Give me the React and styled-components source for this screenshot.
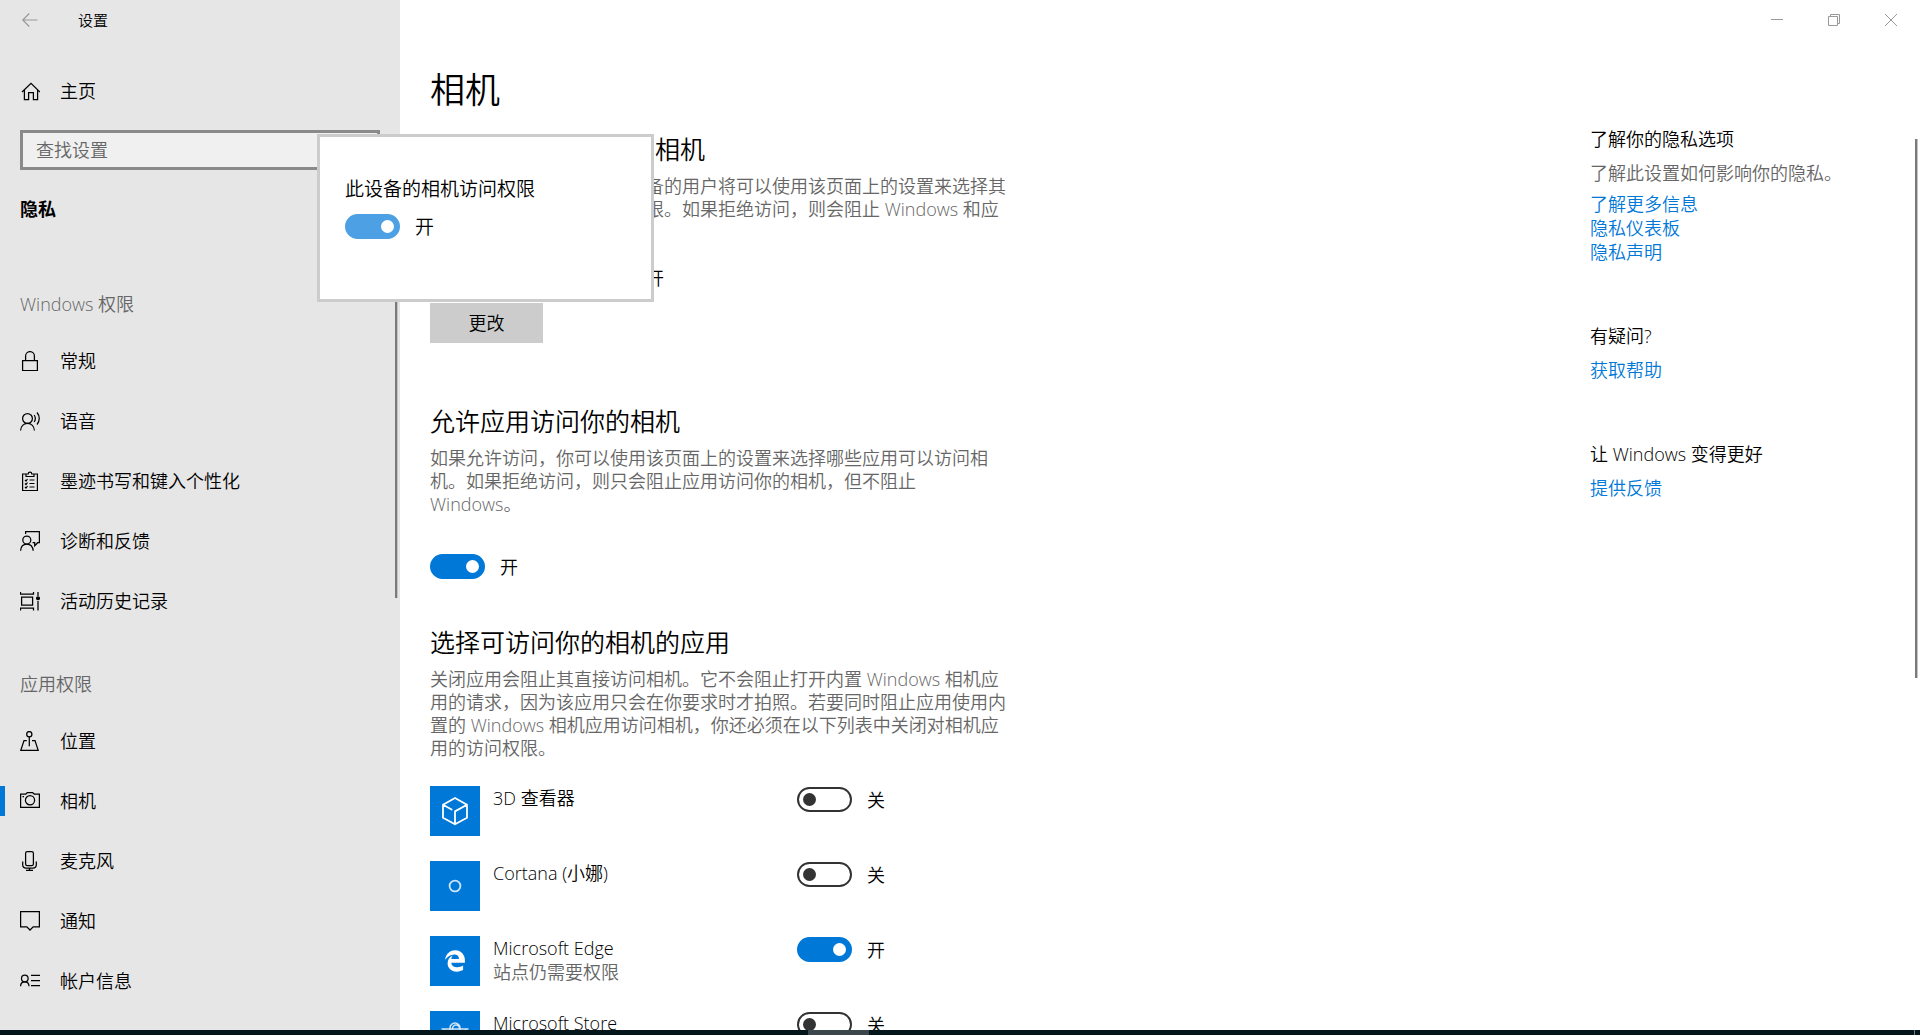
import React, { useState } from 'react';
import styled, { createGlobalStyle, css } from 'styled-components';
import { FaEdgeLegacy } from 'react-icons/fa6';

const GlobalStyle = createGlobalStyle`
  *, *::before, *::after { box-sizing: border-box; }
  html, body, #root { height: 100%; }
  body {
    margin: 0;
    background: #fff;
    color: #000;
    font-family: "Open Sans", "Noto Sans CJK SC", sans-serif;
    font-size: 18px;
    font-weight: 350;
    line-height: 24px;
  }
  h1, h2, h3, p, ul { margin: 0; padding: 0; font-size: inherit; font-weight: inherit; }
  ul { list-style: none; }
  button, input { font: inherit; color: inherit; }
`;

const Desktop = styled.div`
  position: relative;
  display: flex;
  flex-direction: column;
  height: 100vh;
  overflow: hidden;
`;

const Window = styled.div`
  display: flex;
  flex: 1;
  min-height: 0;
  overflow: hidden;
`;

const Sidebar = styled.aside`
  position: relative;
  flex: none;
  width: 400px;
  background: #e6e6e6;
  overflow: hidden;
`;

const Pane = styled.div`
  position: relative;
  flex: 1;
  min-width: 0;
  overflow: hidden;
`;

const TitleBar = styled.header`
  display: flex;
  align-items: center;
  justify-content: ${(p) => (p.$end ? 'flex-end' : 'flex-start')};
  height: 40px;
  padding-right: 1px;
  font-size: 15px;
`;

const BackButton = styled.button`
  display: grid;
  place-items: center;
  width: 60px;
  height: 40px;
  margin-right: 18px;
  padding: 0;
  border: 0;
  background: none;
  color: #999;
`;

const CaptionButton = styled.button`
  display: grid;
  place-items: center;
  width: 57px;
  height: 40px;
  padding: 0;
  border: 0;
  background: none;
  color: #999;
`;

const NavLink = styled.a`
  position: relative;
  display: flex;
  align-items: center;
  gap: 20px;
  height: 60px;
  padding: 0 20px;
  color: #000;
  text-decoration: none;
  ${(p) =>
    p.$active &&
    css`
      &::before {
        content: '';
        position: absolute;
        left: 0;
        top: 15px;
        width: 5px;
        height: 30px;
        background: #0078d7;
      }
    `}
`;

const HomeArea = styled.div`
  padding-top: 21px;
`;

const Search = styled.input`
  display: block;
  width: calc(100% - 40px);
  height: 40px;
  margin: 9px 20px 0;
  padding: 0 13px;
  border: 3px solid #8a8a8a;
  border-radius: 0;
  background: #f0f0f0;
  outline: 0;
  &::placeholder {
    color: #666;
    opacity: 1;
  }
`;

const Category = styled.h2`
  margin: 27px 20px 71px;
  font-weight: 700;
`;

const NavGroup = styled.section`
  & + & {
    margin-top: 41px;
  }
`;

const NavHeading = styled.h3`
  margin: 0 20px 15px;
  color: #666;
`;

const ScrollThumb = styled.div`
  position: absolute;
  top: ${(p) => p.$top}px;
  right: 2px;
  width: 3px;
  height: ${(p) => p.$length}px;
  border-right: 1px solid #c4c4c4;
  background: #7a7a7a;
`;

const Columns = styled.div`
  display: flex;
  justify-content: space-between;
  padding-left: 30px;
`;

const Content = styled.main`
  flex: none;
  padding-top: 26px;
`;

const PageTitle = styled.h1`
  margin-bottom: 19px;
  font-size: 35px;
  line-height: 48px;
`;

const Section = styled.section`
  margin-bottom: ${(p) => p.$gap}px;
`;

const SectionTitle = styled.h2`
  margin-bottom: 10px;
  font-size: 25px;
  line-height: 32px;
`;

const Description = styled.p`
  margin-bottom: ${(p) => p.$gap}px;
  color: #666;
  line-height: 23px;
`;

const Status = styled.p`
  margin-bottom: 13px;
`;

const ChangeButton = styled.button`
  width: 113px;
  height: 40px;
  padding: 0;
  border: 0;
  background: #ccc;
`;

const ToggleLabel = styled.label`
  display: flex;
  align-items: center;
  gap: 15px;
  height: 25px;
  font-size: ${(p) => (p.$large ? 19 : 18)}px;
`;

const ToggleInput = styled.input`
  appearance: none;
  display: flex;
  align-items: center;
  width: 55px;
  height: 25px;
  margin: 0;
  padding: 0 4px;
  border: 2px solid #333;
  border-radius: 13px;
  background: #fff;
  &::before {
    content: '';
    width: 13px;
    height: 13px;
    border-radius: 50%;
    background: #333;
  }
  &:checked {
    justify-content: flex-end;
    border-color: ${(p) => (p.$soft ? '#4ca0e3' : '#0078d7')};
    background: ${(p) => (p.$soft ? '#4ca0e3' : '#0078d7')};
  }
  &:checked::before {
    background: #fff;
  }
`;

const AppList = styled.ul`
  display: flex;
  flex-direction: column;
  gap: 25px;
`;

const AppRow = styled.li`
  display: grid;
  grid-template-columns: 50px 291px auto;
  column-gap: 13px;
  justify-content: start;
  height: 50px;
`;

const AppTile = styled.div`
  display: grid;
  place-items: center;
  background: #0078d7;
  color: #fff;
`;

const AppNote = styled.p`
  color: #666;
`;

const ToggleCell = styled.div`
  padding-top: 1px;
`;

const Related = styled.aside`
  flex: none;
  width: 330px;
  padding-top: 87px;
`;

const RelatedGroup = styled.section`
  display: flex;
  flex-direction: column;
  align-items: flex-start;
  margin-bottom: 60px;
`;

const RelatedTitle = styled.h3`
  margin-bottom: 10px;
`;

const RelatedText = styled.p`
  margin-bottom: 7px;
  color: #666;
`;

const TextLink = styled.a`
  color: #0078d7;
  text-decoration: none;
`;

const Flyout = styled.div`
  position: absolute;
  left: 317px;
  top: 134px;
  width: 337px;
  height: 168px;
  padding: 40px 25px;
  border: 3px solid #ccc;
  background: #fff;
  font-size: 19px;
`;

const FlyoutTitle = styled.p`
  margin-bottom: 13px;
`;

const Taskbar = styled.footer`
  display: flex;
  flex: none;
  justify-content: space-between;
  height: 5px;
  padding: 0 5px 0 808px;
  background: #04161c;
`;

const TaskbarItem = styled.span`
  width: 61px;
  background: #3b474b;
`;

const TaskbarEdge = styled.span`
  width: 1px;
  background: #6f7b7f;
`;

const Glyph = ({ children, size = 20, width = 1.25 }) => (
  <svg width={size} height={size} viewBox={`0 0 ${size} ${size}`} fill="none" stroke="currentColor" strokeWidth={width} aria-hidden="true">
    {children}
  </svg>
);

const icons = {
  home: (
    <Glyph>
      <path d="M2 11 11 2.400l9 8.600M4.400 9v9.600h4.200v-7h4.800v7h4.200V9" />
    </Glyph>
  ),
  lock: (
    <Glyph>
      <path d="M2.600 9.500h14.800v10H2.600zM5.600 9.500V5a4.400 4.400 0 0 1 8.800 0v4.500" />
    </Glyph>
  ),
  speech: (
    <Glyph>
      <circle cx="7.5" cy="7.5" r="4.9" />
      <path d="M.6 19.500c.3-4.200 3-7.100 6.900-7.100s6.600 2.900 6.900 7.100M14.200 4c1.300 2 1.300 5 0 7M17 1.500c3 3.500 3 8.500 0 12" />
    </Glyph>
  ),
  clipboard: (
    <Glyph width={1.2}>
      <path d="M6 3H2.600v16.500h14.800V3H14M6 5.500V3h2.200a1.800 1.800 0 0 1 3.600 0H14v2.500z" />
      <path d="M9.500 9h5M9.500 12.500h5M9.500 16h5M5 9l1 1 1.500-2M5 12.500l1 1 1.500-2M5 16l1 1 1.500-2" />
    </Glyph>
  ),
  feedback: (
    <Glyph>
      <circle cx="6.800" cy="9" r="4" />
      <path d="M.6 19.800c.2-4 2.600-6.600 6.200-6.600s6 2.600 6.400 6.600M5.600 3V.7h13.800v11h-1.700l-3 3v-3H12.600" />
    </Glyph>
  ),
  history: (
    <Glyph>
      <path d="M.5 1v2h13V1M.5 19.500v-2.400h13v2.400M1.600 6h11v8h-11zM18 1v4M18 10v9.500" />
      <circle cx="18" cy="7.300" r="1.400" fill="currentColor" />
    </Glyph>
  ),
  location: (
    <Glyph>
      <circle cx="9.300" cy="3.200" r="2.600" />
      <path d="M9.300 5.800v9.500M6.800 9.500H4L.8 19.300h17.400L15 9.500h-3" />
    </Glyph>
  ),
  camera: (
    <Glyph>
      <path d="M.6 3h5.200l1.600-1.500h5.200L14.200 3h5.200v13.300H.6z" />
      <circle cx="10" cy="9.300" r="4.600" />
      <path d="M2.500 5.500h1.500" />
    </Glyph>
  ),
  mic: (
    <Glyph>
      <rect x="5.600" y=".7" width="7.800" height="14" rx="1.600" />
      <path d="M2.700 10.500v3.200c0 2 1.500 3.400 3.500 3.400h6.600c2 0 3.500-1.400 3.500-3.400v-3.200M9.500 17.100v2.400M6 19.400h7" />
    </Glyph>
  ),
  message: (
    <Glyph>
      <path d="M.6 .6h18.800v15.200h-6.200L10 19l-3.200-3.200H.6z" />
    </Glyph>
  ),
  account: (
    <Glyph>
      <circle cx="4.800" cy="7.500" r="3.300" />
      <path d="M.6 15.300c0-2.800 1.700-4.500 4.200-4.500s4.200 1.700 4.200 4.500M11 4.300h9M11 9.500h9M11 14.700h9" />
    </Glyph>
  ),
};

const tiles = {
  cube: (
    <svg width="30" height="30" viewBox="0 0 30 30" fill="none" stroke="#fff" strokeWidth="1.800" strokeLinejoin="round" strokeLinecap="round" aria-hidden="true">
      <path d="M15 2 27 8.700v13L15 28.300 3 21.700v-13zM27 8.700 15 15.400v12.900M3 8.700l8.600 4.800" />
    </svg>
  ),
  ring: (
    <svg width="14" height="14" viewBox="0 0 14 14" fill="none" stroke="#cfe5f8" strokeWidth="1.800" aria-hidden="true">
      <circle cx="7" cy="7" r="5.400" />
    </svg>
  ),
  edge: <FaEdgeLegacy size={22} aria-hidden="true" />,
  store: (
    <svg width="30" height="30" viewBox="0 0 30 30" fill="none" stroke="#cfe5f8" strokeWidth="1.600" aria-hidden="true">
      <path d="M1.500 8h27M4.500 8v18h21V8M10 12V7a5 5 0 0 1 10 0v5M12.500 12V7.500a3.500 3.500 0 0 1 7 0" />
    </svg>
  ),
};

const systemItems = [
  ['lock', '常规'],
  ['speech', '语音'],
  ['clipboard', '墨迹书写和键入个性化'],
  ['feedback', '诊断和反馈'],
  ['history', '活动历史记录'],
];

const appItems = [
  ['location', '位置'],
  ['camera', '相机'],
  ['mic', '麦克风'],
  ['message', '通知'],
  ['account', '帐户信息'],
];

const apps = [
  { name: '3D 查看器', tile: 'cube', on: false },
  { name: 'Cortana (小娜)', tile: 'ring', on: false },
  { name: 'Microsoft Edge', tile: 'edge', on: true, note: '站点仍需要权限' },
  { name: 'Microsoft Store', tile: 'store', on: false },
];

function Toggle({ initial, name, soft, large }) {
  const [on, setOn] = useState(initial);
  return (
    <ToggleLabel $large={large}>
      <ToggleInput type="checkbox" role="switch" aria-label={name} checked={on} onChange={() => setOn(!on)} $soft={soft} />
      {on ? '开' : '关'}
    </ToggleLabel>
  );
}

function NavSection({ title, items, current }) {
  return (
    <NavGroup>
      <NavHeading>{title}</NavHeading>
      {items.map(([icon, label]) => (
        <NavLink key={label} href="#" $active={label === current} aria-current={label === current ? 'page' : undefined}>
          {icons[icon]}
          {label}
        </NavLink>
      ))}
    </NavGroup>
  );
}

export default function App() {
  return (
    <Desktop>
      <GlobalStyle />
      <Window>
        <Sidebar>
          <TitleBar>
            <BackButton aria-label="返回">
              <Glyph size={16} width={1.2}>
                <path d="M15.500 8H.8M7.200 1.500.8 8l6.400 6.500" />
              </Glyph>
            </BackButton>
            设置
          </TitleBar>
          <HomeArea>
            <NavLink href="#">
              {icons.home}
              主页
            </NavLink>
          </HomeArea>
          <Search type="text" placeholder="查找设置" aria-label="查找设置" />
          <Category>隐私</Category>
          <nav>
            <NavSection title="Windows 权限" items={systemItems} />
            <NavSection title="应用权限" items={appItems} current="相机" />
          </nav>
          <ScrollThumb $top={240} $length={358} />
        </Sidebar>

        <Pane>
          <TitleBar $end>
            <CaptionButton aria-label="最小化">
              <Glyph size={12} width={1}>
                <path d="M0 5.500h12" />
              </Glyph>
            </CaptionButton>
            <CaptionButton aria-label="还原">
              <Glyph size={12} width={1}>
                <path d="M.5 2.500h9v9h-9zM2.500 2.500v-2h9v9h-2" />
              </Glyph>
            </CaptionButton>
            <CaptionButton aria-label="关闭">
              <Glyph size={12} width={1}>
                <path d="m0 0 12 12M12 0 0 12" />
              </Glyph>
            </CaptionButton>
          </TitleBar>
          <Columns>
            <Content>
              <PageTitle>相机</PageTitle>

              <Section $gap={62}>
                <SectionTitle>允许访问此设备上的相机</SectionTitle>
                <Description $gap={22}>
                  如果允许访问，则使用此设备的用户将可以使用该页面上的设置来选择其
                  <br />
                  应用是否具有相机的访问权限。如果拒绝访问，则会阻止 Windows 和应
                  <br />
                  用访问相机。
                </Description>
                <Status>此设备的相机访问权限已打开</Status>
                <ChangeButton>更改</ChangeButton>
              </Section>

              <Section $gap={47}>
                <SectionTitle>允许应用访问你的相机</SectionTitle>
                <Description $gap={38}>
                  如果允许访问，你可以使用该页面上的设置来选择哪些应用可以访问相
                  <br />
                  机。如果拒绝访问，则只会阻止应用访问你的相机，但不阻止
                  <br />
                  Windows。
                </Description>
                <Toggle initial name="允许应用访问你的相机" />
              </Section>

              <Section $gap={0}>
                <SectionTitle>选择可访问你的相机的应用</SectionTitle>
                <Description $gap={26}>
                  关闭应用会阻止其直接访问相机。它不会阻止打开内置 Windows 相机应
                  <br />
                  用的请求，因为该应用只会在你要求时才拍照。若要同时阻止应用使用内
                  <br />
                  置的 Windows 相机应用访问相机，你还必须在以下列表中关闭对相机应
                  <br />
                  用的访问权限。
                </Description>
                <AppList>
                  {apps.map((app) => (
                    <AppRow key={app.name}>
                      <AppTile>{tiles[app.tile]}</AppTile>
                      <div>
                        <p>{app.name}</p>
                        {app.note && <AppNote>{app.note}</AppNote>}
                      </div>
                      <ToggleCell>
                        <Toggle initial={app.on} name={app.name} />
                      </ToggleCell>
                    </AppRow>
                  ))}
                </AppList>
              </Section>
            </Content>

            <Related>
              <RelatedGroup>
                <RelatedTitle>了解你的隐私选项</RelatedTitle>
                <RelatedText>了解此设置如何影响你的隐私。</RelatedText>
                <TextLink href="#">了解更多信息</TextLink>
                <TextLink href="#">隐私仪表板</TextLink>
                <TextLink href="#">隐私声明</TextLink>
              </RelatedGroup>
              <RelatedGroup>
                <RelatedTitle>有疑问?</RelatedTitle>
                <TextLink href="#">获取帮助</TextLink>
              </RelatedGroup>
              <RelatedGroup>
                <RelatedTitle>让 Windows 变得更好</RelatedTitle>
                <TextLink href="#">提供反馈</TextLink>
              </RelatedGroup>
            </Related>
          </Columns>
          <ScrollThumb $top={139} $length={539} />
        </Pane>
      </Window>
      <Taskbar>
        <TaskbarItem />
        <TaskbarEdge />
      </Taskbar>

      <Flyout role="dialog" aria-label="此设备的相机访问权限">
        <FlyoutTitle>此设备的相机访问权限</FlyoutTitle>
        <Toggle initial name="此设备的相机访问权限" soft large />
      </Flyout>
    </Desktop>
  );
}
